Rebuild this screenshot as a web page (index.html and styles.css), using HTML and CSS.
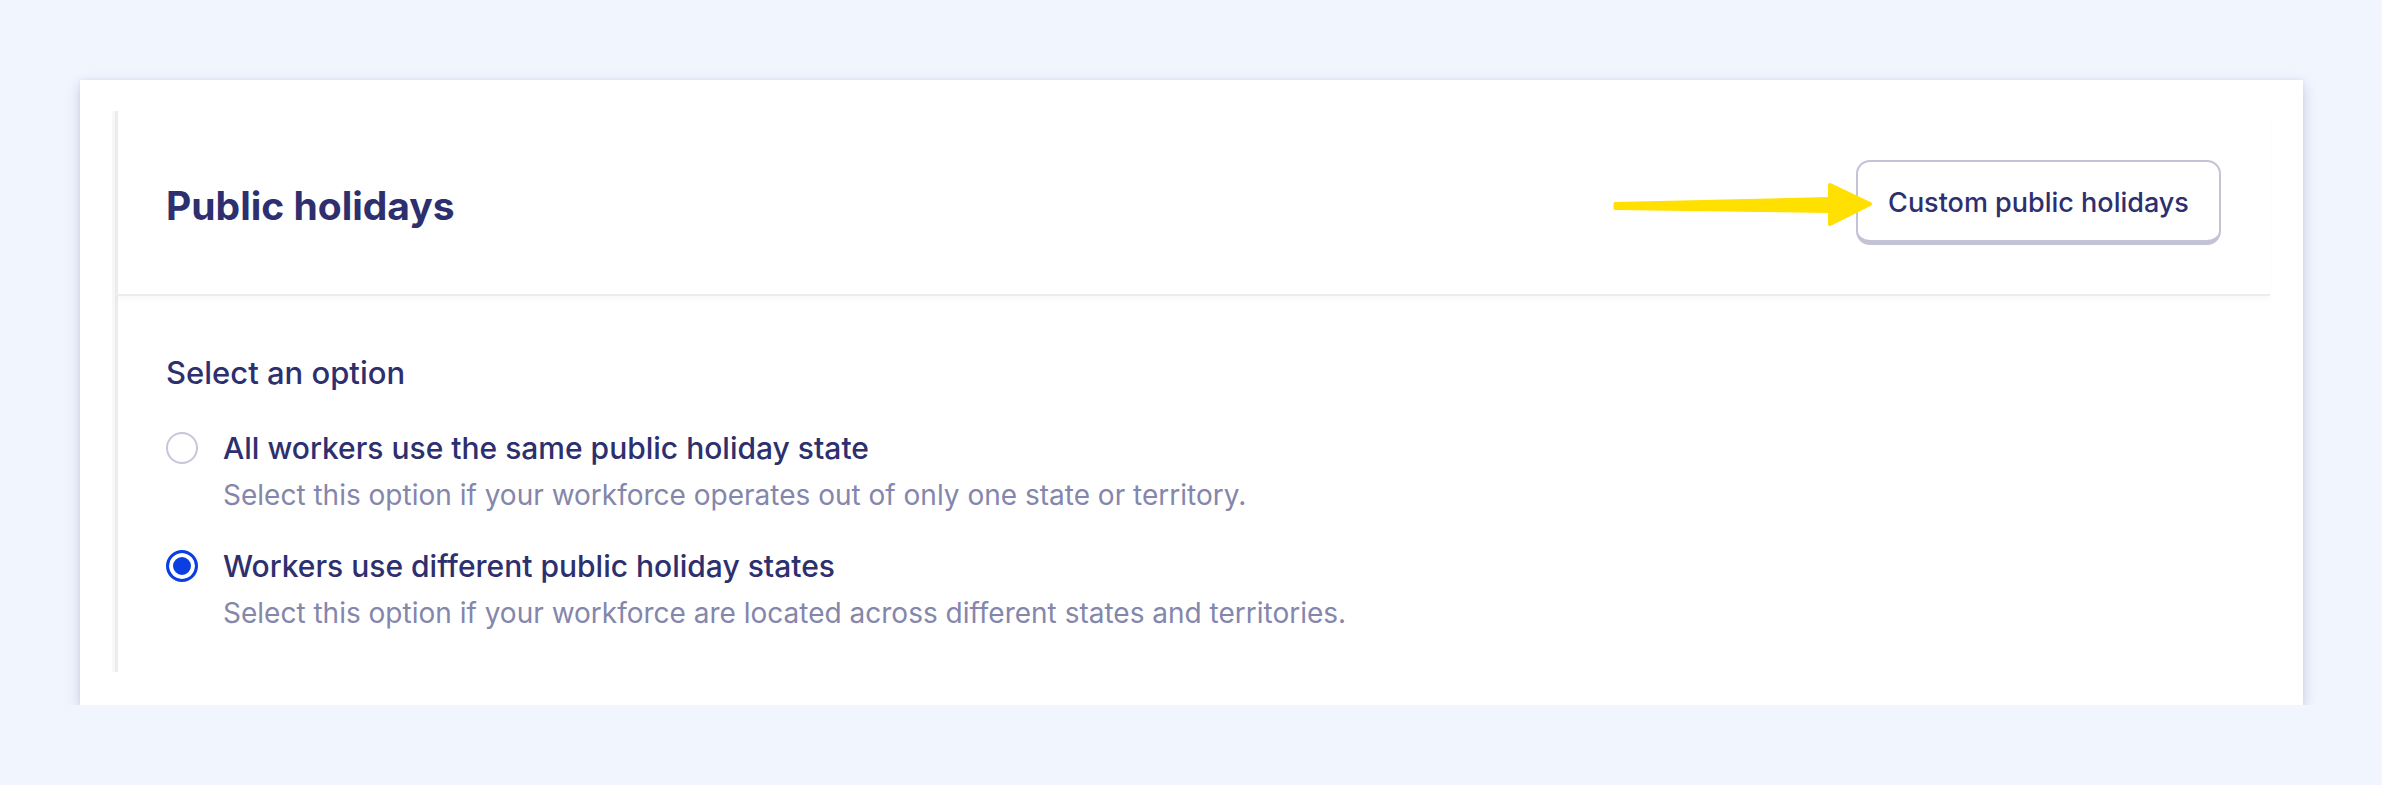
FILE: index.html
```html
<!DOCTYPE html>
<html lang="en">
<head>
<meta charset="utf-8">
<title>Public holidays</title>
<link rel="stylesheet" href="styles.css">
</head>
<body>
<div class="page">
  <section class="card">
    <div class="panel">
      <header class="panel-head">
        <h2 class="title">Public holidays</h2>
        <div class="btn-wrap">
          <svg class="arrow" viewBox="0 0 266 48" width="266" height="48" aria-hidden="true">
            <path d="M5 23.5 L220 18.5 L220 31.5 L5 28.5 Z" fill="#ffe000" stroke="#ffe000" stroke-width="3" stroke-linejoin="round"/>
            <path d="M220 5 L260 24 L220 44 Z" fill="#ffe000" stroke="#ffe000" stroke-width="4" stroke-linejoin="round"/>
          </svg>
          <button class="btn" type="button">Custom public holidays</button>
        </div>
      </header>
      <div class="panel-body">
        <p class="legend">Select an option</p>
        <div class="option">
          <span class="radio"></span>
          <span class="opt-text">
            <span class="opt-label">All workers use the same public holiday state</span>
            <span class="opt-desc">Select this option if your workforce operates out of only one state or territory.</span>
          </span>
        </div>
        <div class="option">
          <span class="radio checked"></span>
          <span class="opt-text">
            <span class="opt-label">Workers use different public holiday states</span>
            <span class="opt-desc">Select this option if your workforce are located across different states and territories.</span>
          </span>
        </div>
      </div>
    </div>
  </section>
</div>
</body>
</html>
```
FILE: styles.css
```css
* { box-sizing: border-box; }
html, body { margin: 0; padding: 0; }
body {
  background: #f1f5fe;
  font-family: "Inter", "Liberation Sans", sans-serif;
  color: #2d2f6e;
}
.page {
  padding: 80px 0 0 80px;
}
.card {
  width: 2223px;
  height: 625px;
  background: #ffffff;
  padding: 31px 33px 33px 32px;
  box-shadow: 0 5px 14px rgba(40, 50, 100, 0.2), 0 0 4px rgba(40, 50, 100, 0.06);
}
.panel {
  height: 100%;
  border-left: 3px solid #f8f8f9;
  box-shadow: inset 3px 0 0 #ececf0;
}
.panel-head {
  height: 185px;
  display: flex;
  align-items: center;
  justify-content: space-between;
  padding: 0 49px 0 51px;
  border-bottom: 2px solid #ebebf0;
  box-shadow: 0 4px 6px rgba(0, 0, 0, 0.025);
}
.title {
  margin: 0;
  padding-top: 6px;
  font-size: 39px;
  font-weight: 700;
  line-height: 48px;
  color: #2d2f6e;
}
.btn-wrap {
  position: relative;
}
.arrow {
  position: absolute;
  left: -246px;
  top: 20px;
}
.btn {
  display: block;
  width: 365px;
  height: 85px;
  background: #ffffff;
  border: 2px solid #c3c3d7;
  border-bottom-width: 5px;
  border-radius: 14px;
  font-family: "Inter", "Liberation Sans", sans-serif;
  font-size: 27px;
  font-weight: 500;
  color: #2d2f6e;
  padding: 3px 0 0;
}
.panel-body {
  padding: 53px 48px 0 51px;
}
.legend {
  margin: 0 0 27px;
  font-size: 31px;
  font-weight: 500;
  line-height: 48px;
}
.option {
  display: flex;
  gap: 25px;
  margin-bottom: 24px;
}
.radio {
  flex: none;
  width: 32px;
  height: 32px;
  margin-top: 8px;
  border: 2px solid #c6c6da;
  border-radius: 50%;
  background: #fff;
}
.radio.checked {
  border: 3px solid #0b3fe3;
  box-shadow: inset 0 0 0 4px #fff;
  background: #0b3fe3;
}
.opt-text {
  display: flex;
  flex-direction: column;
}
.opt-label {
  font-size: 30px;
  font-weight: 500;
  line-height: 48px;
}
.opt-desc {
  font-size: 28px;
  font-weight: 400;
  line-height: 46px;
  color: #8486ab;
}
```
